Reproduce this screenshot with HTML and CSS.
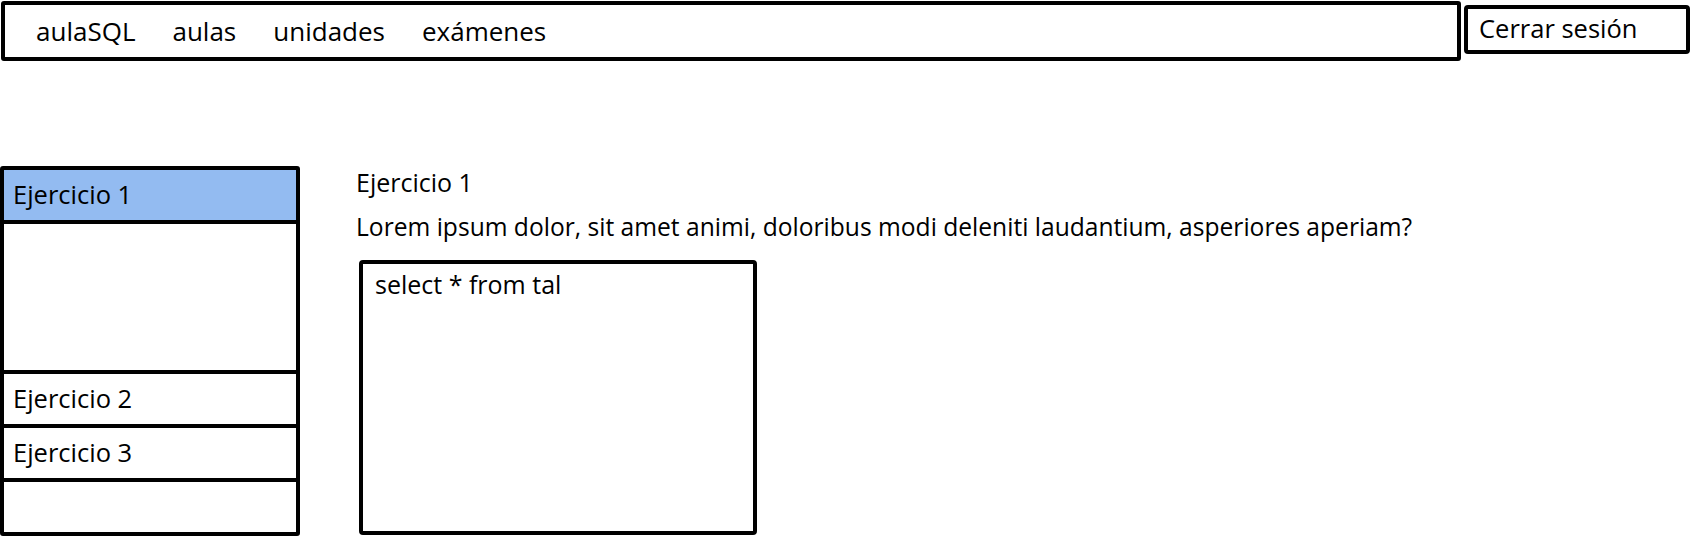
FILE: index.html
```html
<!DOCTYPE html>
<html lang="es">
<head>
<meta charset="utf-8">
<title>aulaSQL</title>
<link rel="stylesheet" href="styles.css">
</head>
<body>
<header class="top">
  <nav class="nav">
    <span class="nav-item">aulaSQL</span>
    <span class="nav-item">aulas</span>
    <span class="nav-item">unidades</span>
    <span class="nav-item">exámenes</span>
  </nav>
  <div class="logout">Cerrar sesión</div>
</header>
<div class="layout">
  <aside class="sidebar">
    <div class="item active">Ejercicio 1</div>
    <div class="panel"></div>
    <div class="item">Ejercicio 2</div>
    <div class="item">Ejercicio 3</div>
    <div class="item"></div>
  </aside>
  <main class="content">
    <div class="title">Ejercicio 1</div>
    <div class="question">Lorem ipsum dolor, sit amet animi, doloribus modi deleniti laudantium, asperiores aperiam?</div>
    <div class="editor">select * from tal</div>
  </main>
</div>
</body>
</html>
```
FILE: styles.css
```css
html, body {
  margin: 0;
  padding: 0;
  background: #fff;
}
body {
  font-family: "Open Sans", "Liberation Sans", sans-serif;
  font-size: 25px;
  color: #000;
  width: 1692px;
  height: 538px;
  overflow: hidden;
}
.top {
  display: flex;
  gap: 3px;
  padding: 1px 0 0 1px;
}
.nav {
  box-sizing: border-box;
  width: 1460px;
  height: 60px;
  border: 4px solid #000;
  border-radius: 3px;
  display: flex;
  align-items: center;
  padding-left: 31px;
  font-size: 26px;
  line-height: 28px;
}
.nav-item {
  margin-right: 37px;
}
.logout {
  box-sizing: border-box;
  width: 226px;
  height: 49px;
  margin-top: 4px;
  border: 4px solid #000;
  border-radius: 4px;
  padding: 5px 0 0 11px;
  font-size: 25.5px;
  line-height: 28px;
}
.layout {
  display: flex;
  margin-top: 105px;
}
.sidebar {
  box-sizing: border-box;
  width: 300px;
  border: 4px solid #000;
  border-radius: 3px;
  display: flex;
  flex-direction: column;
}
.item {
  box-sizing: border-box;
  height: 54px;
  display: flex;
  align-items: center;
  padding: 0 0 2px 9px;
  font-size: 25.5px;
  line-height: 28px;
  border-top: 4px solid #000;
}
.item:first-child {
  border-top: 0;
  height: 50px;
}
.item.active {
  background: #93bbf1;
}
.panel {
  height: 146px;
  border-top: 4px solid #000;
}
.content {
  padding-left: 56px;
  padding-top: 1px;
  line-height: 31px;
}
.question {
  margin-top: 13px;
  font-size: 24.6px;
}
.editor {
  box-sizing: border-box;
  width: 398px;
  height: 275px;
  margin-top: 18px;
  margin-left: 3px;
  border: 4px solid #000;
  border-radius: 4px;
  padding: 5px 12px;
}
```
